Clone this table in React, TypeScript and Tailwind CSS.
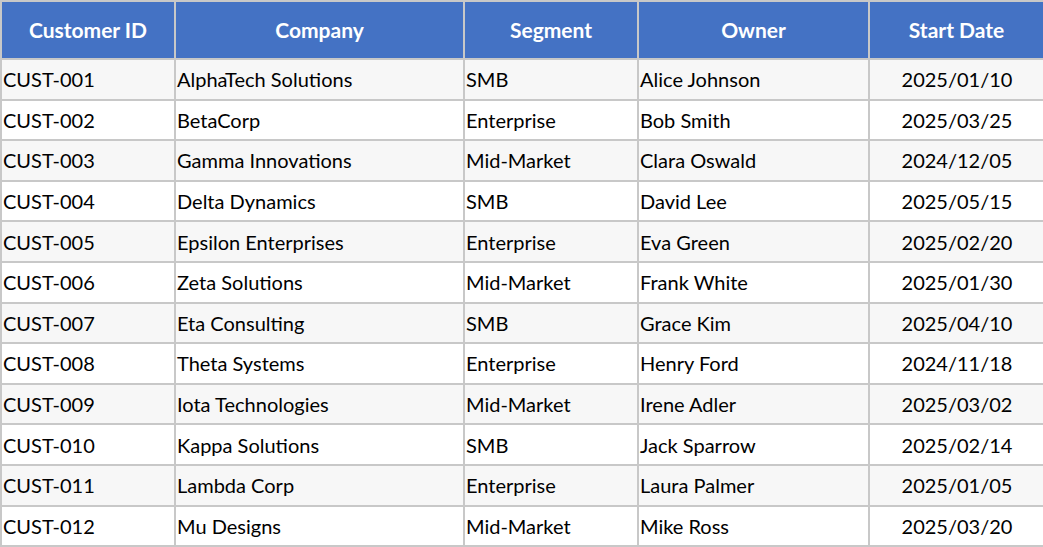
import React from "react";

const rows = [
  ["CUST-001", "AlphaTech Solutions", "SMB", "Alice Johnson", "2025/01/10"],
  ["CUST-002", "BetaCorp", "Enterprise", "Bob Smith", "2025/03/25"],
  ["CUST-003", "Gamma Innovations", "Mid-Market", "Clara Oswald", "2024/12/05"],
  ["CUST-004", "Delta Dynamics", "SMB", "David Lee", "2025/05/15"],
  ["CUST-005", "Epsilon Enterprises", "Enterprise", "Eva Green", "2025/02/20"],
  ["CUST-006", "Zeta Solutions", "Mid-Market", "Frank White", "2025/01/30"],
  ["CUST-007", "Eta Consulting", "SMB", "Grace Kim", "2025/04/10"],
  ["CUST-008", "Theta Systems", "Enterprise", "Henry Ford", "2024/11/18"],
  ["CUST-009", "Iota Technologies", "Mid-Market", "Irene Adler", "2025/03/02"],
  ["CUST-010", "Kappa Solutions", "SMB", "Jack Sparrow", "2025/02/14"],
  ["CUST-011", "Lambda Corp", "Enterprise", "Laura Palmer", "2025/01/05"],
  ["CUST-012", "Mu Designs", "Mid-Market", "Mike Ross", "2025/03/20"],
];

const headers = ["Customer ID", "Company", "Segment", "Owner", "Start Date"];

export default function App() {
  return (
    <div className="w-[1043px] h-[547px] bg-white overflow-hidden" style={{ fontFamily: "Lato, 'Liberation Sans', sans-serif" }}>
      <table className="w-[1043px] table-fixed border-collapse border-2 border-[#c8c8c8] text-[20px] text-black">
        <colgroup>
          <col className="w-[174px]" />
          <col className="w-[289px]" />
          <col className="w-[174px]" />
          <col className="w-[231px]" />
          <col className="w-[175px]" />
        </colgroup>
        <thead>
          <tr className="h-[58px] bg-[#4472c4]">
            {headers.map((h) => (
              <th key={h} className="border-2 border-[#c8c8c8] text-center font-bold text-white text-[21px] p-0">
                {h}
              </th>
            ))}
          </tr>
        </thead>
        <tbody>
          {rows.map((r, i) => (
            <tr key={r[0]} className={`h-[40.6px] ${i % 2 === 0 ? "bg-[#f7f7f7]" : "bg-white"}`}>
              {r.map((c, j) => (
                <td
                  key={j}
                  className={`border-2 border-[#c8c8c8] p-0 pl-px whitespace-nowrap ${j === 4 ? "text-center" : "text-left"}`}
                >
                  {c}
                </td>
              ))}
            </tr>
          ))}
        </tbody>
      </table>
    </div>
  );
}
